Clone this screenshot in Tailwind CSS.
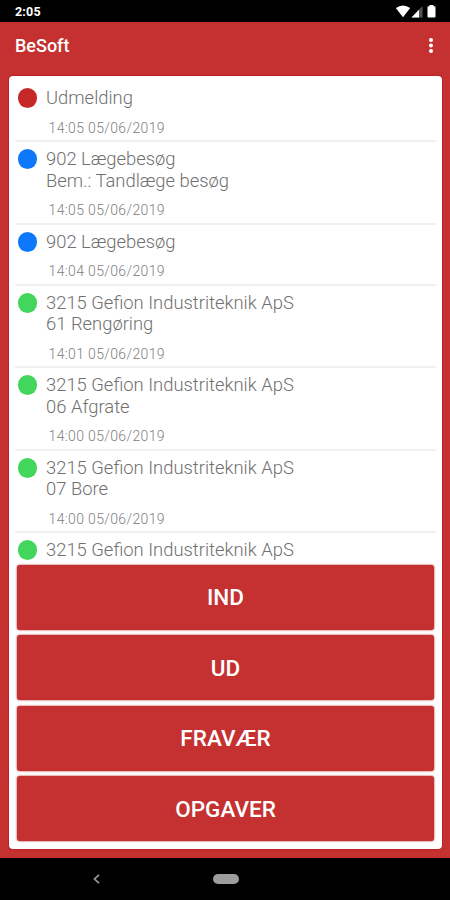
<!DOCTYPE html>
<html lang="da">
  <head>
    <meta charset="UTF-8" />
    <meta name="viewport" content="width=device-width, initial-scale=1.0" />
    <title>BeSoft</title>
    <script src="https://cdn.jsdelivr.net/npm/@tailwindcss/browser@4"></script>
  </head>
  <body class="font-[Roboto,sans-serif]">
    <div class="flex flex-col w-[450px] h-[900px] overflow-hidden bg-[#c53131]">
      <!-- status bar -->
      <div class="flex items-center justify-between h-[22px] shrink-0 bg-black pl-[15px] pr-[13px] text-white">
        <span class="pt-[2px] text-[12.5px] font-bold tracking-[0.2px]">2:05</span>
        <svg class="w-[42px] h-[14px]" viewBox="0 0 42 14" fill="#fff">
          <path d="M0.8 4Q8 -1.2 15.2 4L8 13.2Z" />
          <path d="M16.5 13.5L27.5 2V13.5Z" fill="#555" />
          <path d="M16.5 13.5L24 5.7V13.5Z" />
          <path d="M34.5 2.2V1h4v1.2h1q1 0 1 1V12.5q0 1-1 1h-6q-1 0-1-1V3.2q0-1 1-1z" />
        </svg>
      </div>

      <!-- toolbar -->
      <div class="flex items-center justify-between h-[47px] shrink-0 pl-[15px] pr-[17px] text-white">
        <h1 class="text-[18px] font-medium">BeSoft</h1>
        <svg class="w-1 h-4" viewBox="0 0 4 16" fill="#fff">
          <circle cx="2" cy="2" r="2" />
          <circle cx="2" cy="7.5" r="2" />
          <circle cx="2" cy="13" r="2" />
        </svg>
      </div>

      <div class="flex flex-col h-[772.5px] mt-[7px] ml-[9px] mr-[8.5px] shrink-0 rounded-[4px] bg-white shadow-[0_0_2px_#a80008] pt-[5px] px-[6px] pb-[8px] text-[#707070]">
        <div class="h-[483.5px] shrink-0 overflow-hidden text-[18.4px] leading-[21.5px] font-light">
          <div class="flex h-[61px] border-b-2 border-[#f1f1f1] pl-[3px] pt-[7px]">
            <div class="w-[19px] h-5 shrink-0 rounded-full bg-[#c62828]"></div>
            <div class="pl-[9px]">
              <p class="-mt-px">Udmelding</p>
              <p class="pl-[2.5px] pt-[9px] text-[14px] tracking-[0.36px] text-[#808080]">14:05 05/06/2019</p>
            </div>
          </div>
          <div class="flex h-[82.5px] border-b-2 border-[#f1f1f1] pl-[3px] pt-[7px]">
            <div class="w-[19px] h-5 shrink-0 rounded-full bg-[#0d78fb]"></div>
            <div class="pl-[9px]">
              <p class="-mt-px">902 Lægebesøg</p>
              <p>Bem.: Tandlæge besøg</p>
              <p class="pl-[2.5px] pt-[9px] text-[14px] tracking-[0.36px] text-[#808080]">14:05 05/06/2019</p>
            </div>
          </div>
          <div class="flex h-[61px] border-b-2 border-[#f1f1f1] pl-[3px] pt-[7px]">
            <div class="w-[19px] h-5 shrink-0 rounded-full bg-[#0d78fb]"></div>
            <div class="pl-[9px]">
              <p class="-mt-px">902 Lægebesøg</p>
              <p class="pl-[2.5px] pt-[9px] text-[14px] tracking-[0.36px] text-[#808080]">14:04 05/06/2019</p>
            </div>
          </div>
          <div class="flex h-[82.5px] border-b-2 border-[#f1f1f1] pl-[3px] pt-[7px]">
            <div class="w-[19px] h-5 shrink-0 rounded-full bg-[#43d65c]"></div>
            <div class="pl-[9px]">
              <p class="-mt-px">3215 Gefion Industriteknik ApS</p>
              <p>61 Rengøring</p>
              <p class="pl-[2.5px] pt-[9px] text-[14px] tracking-[0.36px] text-[#808080]">14:01 05/06/2019</p>
            </div>
          </div>
          <div class="flex h-[82.5px] border-b-2 border-[#f1f1f1] pl-[3px] pt-[7px]">
            <div class="w-[19px] h-5 shrink-0 rounded-full bg-[#43d65c]"></div>
            <div class="pl-[9px]">
              <p class="-mt-px">3215 Gefion Industriteknik ApS</p>
              <p>06 Afgrate</p>
              <p class="pl-[2.5px] pt-[9px] text-[14px] tracking-[0.36px] text-[#808080]">14:00 05/06/2019</p>
            </div>
          </div>
          <div class="flex h-[82.5px] border-b-2 border-[#f1f1f1] pl-[3px] pt-[7px]">
            <div class="w-[19px] h-5 shrink-0 rounded-full bg-[#43d65c]"></div>
            <div class="pl-[9px]">
              <p class="-mt-px">3215 Gefion Industriteknik ApS</p>
              <p>07 Bore</p>
              <p class="pl-[2.5px] pt-[9px] text-[14px] tracking-[0.36px] text-[#808080]">14:00 05/06/2019</p>
            </div>
          </div>
          <div class="flex pl-[3px] pt-[7px]">
            <div class="w-[19px] h-5 shrink-0 rounded-full bg-[#43d65c]"></div>
            <div class="pl-[9px]">
              <p class="-mt-px">3215 Gefion Industriteknik ApS</p>
            </div>
          </div>
        </div>

        <!-- buttons -->
        <div class="flex flex-col gap-[5.5px] pl-[2px] pr-[1.5px] text-[22.5px] font-medium text-white">
          <button class="h-[65px] pt-[2px] rounded-[3px] bg-[#c53131] shadow-[0_0_2px_#a80008]">IND</button>
          <button class="h-[65px] pt-[2px] rounded-[3px] bg-[#c53131] shadow-[0_0_2px_#a80008]">UD</button>
          <button class="h-[65px] pt-[2px] rounded-[3px] bg-[#c53131] shadow-[0_0_2px_#a80008]">FRAVÆR</button>
          <button class="h-[65px] pt-[2px] rounded-[3px] bg-[#c53131] shadow-[0_0_2px_#a80008]">OPGAVER</button>
        </div>
      </div>

      <!-- navigation bar -->
      <div class="flex items-center h-[42.5px] mt-auto shrink-0 bg-black pl-[92.5px]">
        <svg class="w-[7px] h-[10px]" viewBox="0 0 7 10" fill="none" stroke="#999" stroke-width="1.7">
          <path d="M6 0.8L1.5 5L6 9.2" />
        </svg>
        <div class="w-[26px] h-[10px] ml-[113px] rounded-full bg-[#9c9c9c]"></div>
      </div>
    </div>
  </body>
</html>
